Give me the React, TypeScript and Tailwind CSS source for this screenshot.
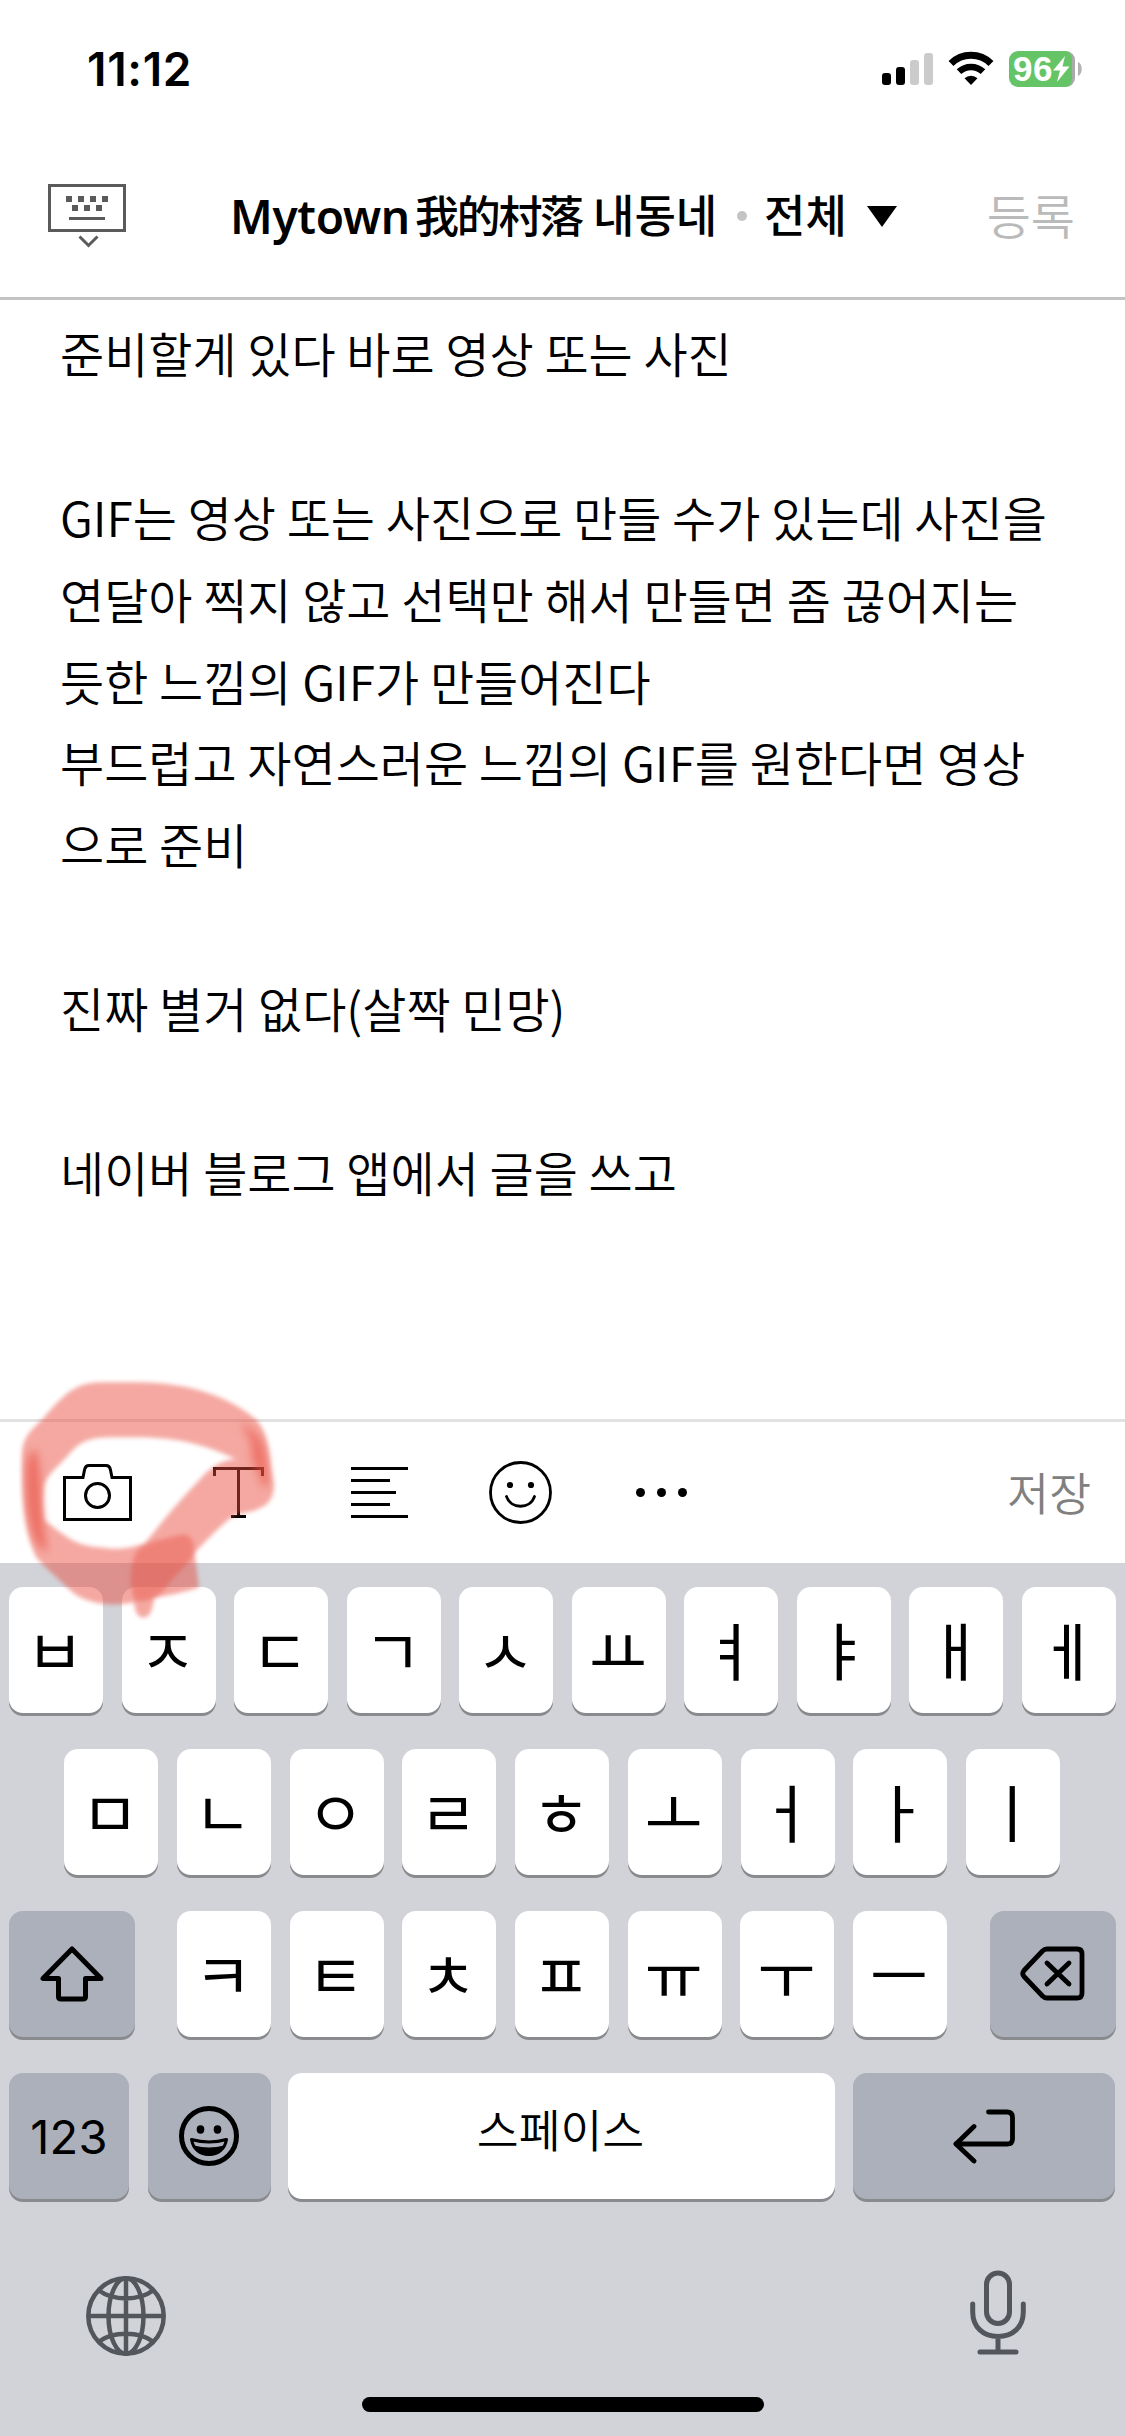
import type { ReactNode } from "react";

const LINES = [
  "준비할게 있다 바로 영상 또는 사진",
  "",
  "GIF는 영상 또는 사진으로 만들 수가 있는데 사진을",
  "연달아 찍지 않고 선택만 해서 만들면 좀 끊어지는",
  "듯한 느낌의 GIF가 만들어진다",
  "부드럽고 자연스러운 느낌의 GIF를 원한다면 영상",
  "으로 준비",
  "",
  "진짜 별거 없다(살짝 민망)",
  "",
  "네이버 블로그 앱에서 글을 쓰고",
];

const ROW_1 = ["ㅂ", "ㅈ", "ㄷ", "ㄱ", "ㅅ", "ㅛ", "ㅕ", "ㅑ", "ㅐ", "ㅔ"];
const ROW_2 = ["ㅁ", "ㄴ", "ㅇ", "ㄹ", "ㅎ", "ㅗ", "ㅓ", "ㅏ", "ㅣ"];
const ROW_3 = ["ㅋ", "ㅌ", "ㅊ", "ㅍ", "ㅠ", "ㅜ", "ㅡ"];

interface KeyProps {
  children: ReactNode;
  className?: string;
  dark?: boolean;
}

function Key({ children, className = "w-[94px]", dark = false }: KeyProps) {
  return (
    <button
      className={`flex h-[126px] shrink-0 items-center justify-center rounded-[14px] shadow-[0_3px_0_#898a8d] ${
        dark ? "bg-[#abb0bb]" : "bg-white"
      } ${className}`}
    >
      {children}
    </button>
  );
}

function Letter({ char }: { char: string }) {
  return (
    <Key>
      <span className="mb-[5px] mr-[2px] text-[63px] leading-none">{char}</span>
    </Key>
  );
}

function StatusBar() {
  return (
    <div className="flex h-[132px] shrink-0 items-start justify-between pl-[87px] pr-[42px]">
      <span className="mt-[41px] font-['Inter'] text-[46px] font-semibold leading-[56px] tracking-[0.7px]">11:12</span>
      <div className="mt-[51px] flex items-start">
        <svg width="52" height="36" viewBox="0 0 52 36">
          <rect x="0" y="22" width="9" height="12" rx="3" />
          <rect x="14" y="16" width="9" height="18" rx="3" />
          <rect x="28" y="9" width="9" height="25" rx="3" fill="#cbcbcb" />
          <rect x="42" y="2" width="9" height="32" rx="3" fill="#cbcbcb" />
        </svg>
        <svg className="ml-[14px]" width="46" height="36" viewBox="0 0 46 36">
          <path d="M3 12.5a28.5 28.5 0 0 1 40 0" fill="none" stroke="#000" strokeWidth="7" />
          <path d="M11 20.7a17.5 17.5 0 0 1 24 0" fill="none" stroke="#000" strokeWidth="6.6" />
          <path d="M16.5 27.2a9.5 9.5 0 0 1 13 0L23 34z" />
        </svg>
        <div className="ml-[15px] flex h-9 w-[66px] items-center rounded-[9px] border-r-[3px] border-[#aaa] bg-[#65c466] pl-[4px]">
          <span className="font-['Liberation_Sans'] text-[35px] font-bold leading-[40px] tracking-[0.5px] text-white">96</span>
          <svg className="-ml-px shrink-0" width="18" height="26" viewBox="0 0 18 26">
            <path d="M13 0 1 14.5h7L5 26 17.5 10.500H10.500z" fill="#fff" />
          </svg>
        </div>
        <svg className="ml-[3px] mt-[11px]" width="5" height="14" viewBox="0 0 5 14">
          <path d="M0 0C5 2 5 12 0 14z" fill="#b3b3b3" />
        </svg>
      </div>
    </div>
  );
}

function Header() {
  return (
    <header className="flex h-[168px] shrink-0 items-start border-b-[3px] border-[#c3c3c3] pl-[48px] pr-[50px]">
      <svg className="mt-[52px] shrink-0" width="78" height="64" viewBox="0 0 78 64" fill="#5a5a5a">
        <rect x="1.500" y="1.500" width="75" height="45" fill="none" stroke="#5a5a5a" strokeWidth="3" />
        <path d="M18 12h6v6h-6zM30 12h6v6h-6zM42 12h6v6h-6zM54 12h6v6h-6zM24 21h6v6h-6zM36 21h6v6h-6zM48 21h6v6h-6zM21 33h36v3H21z" />
        <path d="M31.500 52.500l9 9 9-9" fill="none" stroke="#5a5a5a" strokeWidth="3" />
      </svg>
      <h1 className="ml-[104px] mt-[51px] flex h-[66px] items-center whitespace-nowrap text-[45px] font-medium leading-[66px]">
        <span className="w-[179px] font-['Noto_Sans'] text-[46px] font-semibold tracking-[-0.300px]">Mytown</span>
        <span className="mb-[4px] ml-[6px] w-[167px] font-['Noto_Sans_CJK_SC'] text-[44px] tracking-[-2.300px]">我的村落</span>
        <span className="mb-[4px] ml-[11px] w-[125px]">내동네</span>
        <span className="ml-[19px] size-[10px] rounded-full bg-[#c4c4c4]" />
        <span className="mb-[4px] ml-[17px] w-[83px]">전체</span>
        <svg className="ml-[20px]" width="30" height="21" viewBox="0 0 30 21">
          <path d="M0 0h30L15 21z" />
        </svg>
      </h1>
      <span className="ml-auto mt-[49px] text-[48px] font-[350] leading-[66px] text-[#bababa]">등록</span>
    </header>
  );
}

function Toolbar() {
  return (
    <div className="flex h-[144px] shrink-0 items-center border-t-[3px] border-[#e2e2e2] pl-[63px] pr-[34px]">
      <svg width="69" height="57" viewBox="0 0 69 57" fill="none" stroke="#000" strokeWidth="3">
        <path d="M1.500 55.500v-42h18.500l1.600-8c.6-3 2-4 4.400-4h17c2.400 0 3.800 1 4.400 4l1.600 8h18.500v42z" />
        <circle cx="34.500" cy="31.500" r="12" />
      </svg>
      <svg className="ml-[81px]" width="51" height="51" viewBox="0 0 51 51" fill="none" stroke="#000" strokeWidth="3">
        <path d="M1.500 9V1.500h48V9M25.500 1.500v48M18 49.500h15" />
      </svg>
      <svg className="ml-[87px]" width="57" height="51" viewBox="0 0 57 51" stroke="#000" strokeWidth="3">
        <path d="M0 1.500h57M0 13.500h39M0 25.500h45M0 37.500h39M0 49.500h57" />
      </svg>
      <svg className="ml-[81px]" width="63" height="63" viewBox="0 0 63 63">
        <circle cx="31.500" cy="31.500" r="30" fill="none" stroke="#000" strokeWidth="2.800" />
        <circle cx="21" cy="24" r="3.100" />
        <circle cx="42" cy="24" r="3.100" />
        <path d="M17.500 35.500c4.500 13 23.500 13 28 0" fill="none" stroke="#000" strokeWidth="2.800" strokeLinecap="round" />
      </svg>
      <svg className="ml-[84px]" width="51" height="9" viewBox="0 0 51 9">
        <circle cx="4.500" cy="4.500" r="4.500" />
        <circle cx="25.500" cy="4.500" r="4.500" />
        <circle cx="46.500" cy="4.500" r="4.500" />
      </svg>
      <span className="mb-[4px] ml-auto text-[45.500px] font-[350] leading-[66px] text-[#808080]">저장</span>
    </div>
  );
}

function Keyboard() {
  return (
    <div className="flex grow flex-col bg-[#d1d3d9] pt-6">
      <div className="flex flex-col gap-9">
        <div className="flex justify-between px-[9px]">
          {ROW_1.map((c) => (
            <Letter key={c} char={c} />
          ))}
        </div>
        <div className="flex justify-between pl-[64px] pr-[65px]">
          {ROW_2.map((c) => (
            <Letter key={c} char={c} />
          ))}
        </div>
        <div className="flex px-[9px]">
          <Key dark className="w-[126px]">
            <svg className="mr-[1px]" width="64" height="56" viewBox="0 0 64 56" fill="none" stroke="#000" strokeWidth="5" strokeLinejoin="round">
              <path d="M32 3 3 32.500h15.500v18q0 2.500 2.500 2.500h22q2.500 0 2.500-2.500v-18H61z" />
            </svg>
          </Key>
          <div className="ml-[42px] mr-auto flex w-[770px] justify-between">
            {ROW_3.map((c) => (
              <Letter key={c} char={c} />
            ))}
          </div>
          <Key dark className="w-[126px]">
            <svg className="mr-[2px]" width="65" height="56" viewBox="0 0 65 56" fill="none" stroke="#000" strokeWidth="4.800" strokeLinejoin="round" strokeLinecap="round">
              <path d="M27 3h30q5 0 5 5v39q0 5-5 5H27q-2.500 0-4.500-2L4 30.500q-2.500-3 0-6L22.500 5Q24.500 3 27 3z" />
              <path d="m27 17 22 21M49 17 27 38" />
            </svg>
          </Key>
        </div>
        <div className="flex px-[9px]">
          <Key dark className="w-[120px]">
            <span className="font-['Inter'] text-[47px] leading-none tracking-[0.300px]">123</span>
          </Key>
          <Key dark className="ml-[19px] w-[123px]">
            <svg className="mr-[1px]" width="60" height="60" viewBox="0 0 60 60">
              <circle cx="30" cy="30" r="27.500" fill="none" stroke="#000" strokeWidth="5" />
              <ellipse cx="21.500" cy="23.500" rx="3.800" ry="4.200" />
              <ellipse cx="38.500" cy="23.500" rx="3.800" ry="4.200" />
              <path d="M12.500 33.500Q30 38.500 47.500 33.500C46 43 39 48.500 30 48.500S14 43 12.500 33.500z" fill="none" stroke="#000" strokeWidth="3" strokeLinejoin="round" />
              <path d="M15 39.500Q30 43.500 45 39.500C42 47 36 49.500 30 49.500S18 47 15 39.500z" />
            </svg>
          </Key>
          <Key className="ml-[17px] w-[547px]">
            <span className="mb-[15px] mr-[2px] text-[45.500px] font-[350] leading-none">스페이스</span>
          </Key>
          <Key dark className="ml-[18px] w-[262px]">
            <svg width="63" height="55" viewBox="0 0 63 55" fill="none" stroke="#000" strokeWidth="4.800" strokeLinejoin="round" strokeLinecap="round">
              <path d="M35.500 3H54q5.500 0 5.500 5.500v21.500q0 5-5.500 5H3" />
              <path d="M21 17.500 3 35l18 17" />
            </svg>
          </Key>
        </div>
      </div>

      <div className="mt-[71px] flex items-start justify-between pl-[86px] pr-[99px]">
        <svg className="mt-[6px]" width="80" height="80" viewBox="0 0 80 80" fill="none" stroke="#53575c" strokeWidth="4.500">
          <circle cx="40" cy="40" r="37.700" />
          <ellipse cx="40" cy="40" rx="17.500" ry="37.700" />
          <path d="M40 2v76M2 40h76M13 14.500C27 25 53 25 67 14.500M13 65.500C27 55 53 55 67 65.500" />
        </svg>
        <svg width="56" height="86" viewBox="0 0 56 86" fill="none" stroke="#53575c" strokeWidth="5" strokeLinecap="round">
          <rect x="16.500" y="3" width="23" height="50.500" rx="11.500" />
          <path d="M2.700 34v8c0 15 10.500 24.500 25.300 24.500S53.300 57 53.300 42v-8M28 67v15M10 82h36" />
        </svg>
      </div>
      <div className="mx-auto mb-6 mt-auto h-[15px] w-[402px] rounded-full bg-black" />
    </div>
  );
}

// translucent marker drawn round the camera button
function Marker() {
  return (
    <svg
      className="pointer-events-none absolute left-0 top-[1360px]"
      width="400"
      height="270"
      viewBox="0 0 1200 810"
      fill="#e94b3c"
    >
      <defs>
        <filter id="soft" x="-10%" y="-10%" width="120%" height="120%">
          <feGaussianBlur stdDeviation="6" />
        </filter>
        <filter id="softer" x="-30%" y="-30%" width="160%" height="160%">
          <feGaussianBlur stdDeviation="13" />
        </filter>
      </defs>
      <path
        filter="url(#soft)"
        fillRule="evenodd"
        opacity="0.48"
        d="M66 290C66 240 82 220 130 175C190 105 225 68 300 67H410C560 66 690 110 770 180C812 230 806 290 822 375C822 430 790 450 715 462C690 468 640 520 584 578L597 682C560 696 500 706 462 715C458 750 450 773 430 773C408 773 405 745 402 727C330 742 250 730 210 690C170 650 130 620 108 590C75 520 65 430 66 290ZM132 378C140 345 170 325 210 280C245 240 275 232 340 232H430C540 235 620 255 708 298C660 300 630 325 600 358C540 420 490 480 435 550C380 568 345 570 300 562C220 555 200 530 135 482C128 445 128 410 132 378Z"
      />
      <path filter="url(#soft)" opacity="0.4" d="M400 600C410 560 440 548 500 535C550 520 575 515 582 560C588 600 540 625 500 680C470 715 440 728 405 722C390 680 388 640 400 600Z" />
      <path filter="url(#softer)" opacity="0.6" d="M108 270C125 330 122 400 128 480C135 530 140 560 140 575C90 560 75 440 78 330C80 290 95 270 108 270Z" />
      <path filter="url(#softer)" opacity="0.55" d="M720 190C775 210 796 250 800 300C808 350 810 380 790 385C780 350 765 315 752 290C762 270 750 225 720 190Z" />
    </svg>
  );
}

export default function App() {
  return (
    <div className="relative flex h-[2436px] w-[1125px] flex-col overflow-hidden bg-white font-['Noto_Sans_CJK_KR',sans-serif] text-black">
      <StatusBar />
      <Header />
      <main className="grow pl-[60px] pt-[12px] text-[48px] font-[350] leading-[81.900px]">
        {LINES.map((line, i) => (
          <p key={i} className="h-[81.900px] whitespace-nowrap">
            {line}
          </p>
        ))}
      </main>
      <Toolbar />
      <div className="flex h-[873px] shrink-0 flex-col">
        <Keyboard />
      </div>
      <Marker />
    </div>
  );
}
